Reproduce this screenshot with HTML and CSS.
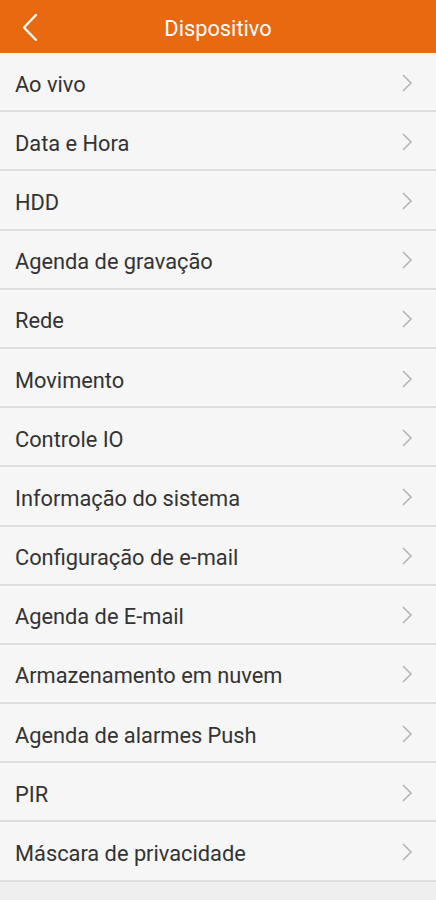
FILE: index.html
```html
<!DOCTYPE html>
<html lang="pt">
<head>
<meta charset="utf-8">
<link rel="stylesheet" href="styles.css">
</head>
<body>
<header class="topbar">
  <span class="back">
    <svg width="16" height="30" viewBox="0 0 16 30"><path d="M14 2 L2 14.5 L14 27" fill="none" stroke="#fff" stroke-width="2.4" stroke-linecap="round" stroke-linejoin="round"/></svg>
  </span>
  <h1 class="title">Dispositivo</h1>
</header>
<ul class="menu">
  <li class="item"><span>Ao vivo</span><svg class="chev" width="12" height="20" viewBox="0 0 12 20"><path d="M2 2 L10 10 L2 18" fill="none" stroke="#b5b5b5" stroke-width="1.6"/></svg></li>
  <li class="item"><span>Data e Hora</span><svg class="chev" width="12" height="20" viewBox="0 0 12 20"><path d="M2 2 L10 10 L2 18" fill="none" stroke="#b5b5b5" stroke-width="1.6"/></svg></li>
  <li class="item"><span>HDD</span><svg class="chev" width="12" height="20" viewBox="0 0 12 20"><path d="M2 2 L10 10 L2 18" fill="none" stroke="#b5b5b5" stroke-width="1.6"/></svg></li>
  <li class="item"><span>Agenda de gravação</span><svg class="chev" width="12" height="20" viewBox="0 0 12 20"><path d="M2 2 L10 10 L2 18" fill="none" stroke="#b5b5b5" stroke-width="1.6"/></svg></li>
  <li class="item"><span>Rede</span><svg class="chev" width="12" height="20" viewBox="0 0 12 20"><path d="M2 2 L10 10 L2 18" fill="none" stroke="#b5b5b5" stroke-width="1.6"/></svg></li>
  <li class="item"><span>Movimento</span><svg class="chev" width="12" height="20" viewBox="0 0 12 20"><path d="M2 2 L10 10 L2 18" fill="none" stroke="#b5b5b5" stroke-width="1.6"/></svg></li>
  <li class="item"><span>Controle IO</span><svg class="chev" width="12" height="20" viewBox="0 0 12 20"><path d="M2 2 L10 10 L2 18" fill="none" stroke="#b5b5b5" stroke-width="1.6"/></svg></li>
  <li class="item"><span>Informação do sistema</span><svg class="chev" width="12" height="20" viewBox="0 0 12 20"><path d="M2 2 L10 10 L2 18" fill="none" stroke="#b5b5b5" stroke-width="1.6"/></svg></li>
  <li class="item"><span>Configuração de e-mail</span><svg class="chev" width="12" height="20" viewBox="0 0 12 20"><path d="M2 2 L10 10 L2 18" fill="none" stroke="#b5b5b5" stroke-width="1.6"/></svg></li>
  <li class="item"><span>Agenda de E-mail</span><svg class="chev" width="12" height="20" viewBox="0 0 12 20"><path d="M2 2 L10 10 L2 18" fill="none" stroke="#b5b5b5" stroke-width="1.6"/></svg></li>
  <li class="item"><span>Armazenamento em nuvem</span><svg class="chev" width="12" height="20" viewBox="0 0 12 20"><path d="M2 2 L10 10 L2 18" fill="none" stroke="#b5b5b5" stroke-width="1.6"/></svg></li>
  <li class="item"><span>Agenda de alarmes Push</span><svg class="chev" width="12" height="20" viewBox="0 0 12 20"><path d="M2 2 L10 10 L2 18" fill="none" stroke="#b5b5b5" stroke-width="1.6"/></svg></li>
  <li class="item"><span>PIR</span><svg class="chev" width="12" height="20" viewBox="0 0 12 20"><path d="M2 2 L10 10 L2 18" fill="none" stroke="#b5b5b5" stroke-width="1.6"/></svg></li>
  <li class="item"><span>Máscara de privacidade</span><svg class="chev" width="12" height="20" viewBox="0 0 12 20"><path d="M2 2 L10 10 L2 18" fill="none" stroke="#b5b5b5" stroke-width="1.6"/></svg></li>
</ul>
</body>
</html>
```
FILE: styles.css
```css
html, body {
  margin: 0;
  padding: 0;
  background: #efefef;
  font-family: Roboto, "Noto Sans", "Liberation Sans", sans-serif;
}
.topbar {
  height: 53px;
  background: #e8690f;
  display: flex;
  align-items: center;
  justify-content: center;
  position: relative;
}
.back {
  position: absolute;
  left: 22px;
  top: 13px;
  display: flex;
}
.title {
  margin: 0;
  color: #fff;
  font-size: 21.8px;
  font-weight: 400;
  padding-top: 3px;
}
.menu {
  list-style: none;
  margin: 0;
  padding: 0;
}
.item {
  box-sizing: border-box;
  height: 59.2px;
  border-bottom: 2px solid #dedede;
  background: #f6f6f6;
  display: flex;
  align-items: center;
  justify-content: space-between;
  padding: 5px 23px 0 15px;
  font-size: 21.8px;
  color: #333;
}
.chev {
  display: block;
  margin-top: -3px;
}
```
